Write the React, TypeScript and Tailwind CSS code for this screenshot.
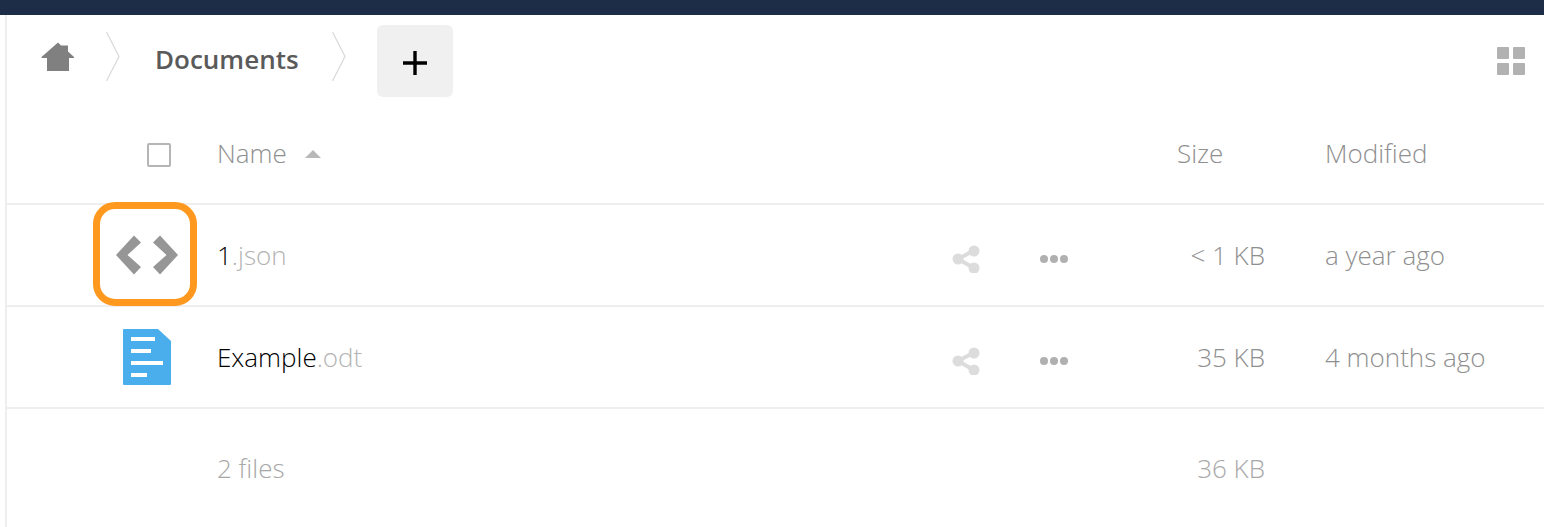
const font = { fontFamily: '"Open Sans", sans-serif' };

function Home() {
  return (
    <svg width="34" height="30" viewBox="0 0 34 30" className="block">
      <path d="M17 0.5 L20 3.5 H27 V9.5 L33 15 V16 H28 V29 H6 V16 H0.5 V15 Z" fill="#808080" />
    </svg>
  );
}

function Crumb() {
  return (
    <svg width="14" height="50" viewBox="0 0 14 50" className="block">
      <path d="M0.5 0 L13 24.5 L0.5 49" fill="none" stroke="#d8d8d8" strokeWidth="1.2" />
    </svg>
  );
}

function Share() {
  return (
    <svg width="28" height="28" viewBox="0 0 28 28" className="block">
      <path d="M6 14 L22 5.5 M6 14 L22 23" stroke="#dcdcdc" strokeWidth="4" fill="none" />
      <circle cx="6" cy="14" r="5.5" fill="#dcdcdc" />
      <circle cx="22" cy="6" r="5.5" fill="#dcdcdc" />
      <circle cx="22" cy="23" r="5.5" fill="#dcdcdc" />
    </svg>
  );
}

function Dots() {
  return (
    <div className="flex gap-[2px]">
      <span className="block h-[8px] w-[8px] rounded-full bg-[#b0b0b0]" />
      <span className="block h-[8px] w-[8px] rounded-full bg-[#b0b0b0]" />
      <span className="block h-[8px] w-[8px] rounded-full bg-[#b0b0b0]" />
    </div>
  );
}

function CodeIcon() {
  return (
    <svg width="62" height="40" viewBox="0 0 62 40" className="block">
      <path d="M0 20 L18 0.5 L25 7.5 L11.5 20 L25 32 L18 39.5 Z M62 20 L44 0.5 L37 7.5 L50.5 20 L37 32 L44 39.5 Z" fill="#969696" />
    </svg>
  );
}

function DocIcon() {
  return (
    <svg width="48" height="56" viewBox="0 0 48 56" className="block">
      <path d="M1 0 H35 L48 12 V55 A1 1 0 0 1 47 56 H1 A1 1 0 0 1 0 55 V1 A1 1 0 0 1 1 0 Z" fill="#4baeec" />
      <path d="M8 8 H32 V12 H8 Z M8 20 H28 V24 H8 Z M8 32 H40 V36 H8 Z M8 44 H24 V48 H8 Z" fill="#fff" />
    </svg>
  );
}

function FileRow({ base, ext, size, modified, icon, highlight }: { base: string; ext: string; size: string; modified: string; icon: React.ReactNode; highlight?: boolean }) {
  return (
    <div className="flex h-[102px] items-center border-t-2 border-[#eeeeee]">
      <div className="relative flex w-[210px] justify-center pl-[70px]">
        {icon}
        {highlight && (
          <div className="absolute left-[86px] top-[-33px] h-[104px] w-[104px] rounded-[22px] border-[7px] border-[#ff981f]" />
        )}
      </div>
      <div className="w-[735px] text-[26px] font-light leading-none text-[#000000]">
        {base}
        <span className="text-[#b4b4b4]">{ext}</span>
      </div>
      <div className="mt-[7px] w-[88px]"><Share /></div>
      <div className="mt-[7px] w-[100px]"><Dots /></div>
      <div className="w-[125px] text-right text-[26px] font-light leading-none text-[#8f8f8f]">{size}</div>
      <div className="pl-[60px] text-[26px] font-light leading-none whitespace-nowrap text-[#8f8f8f]">{modified}</div>
    </div>
  );
}

export default function App() {
  return (
    <div className="h-[527px] w-[1544px] overflow-hidden bg-white" style={font}>
      <div className="h-[15px] bg-[#1d2d48]" />
      <div className="ml-[5px] h-[512px] border-l-2 border-[#eeeeee]">
        <div className="flex h-[92px] items-start pt-[10px]">
          <div className="flex h-[72px] items-center">
            <div className="ml-[34px] mr-[31px] mt-[-8px]"><Home /></div>
            <div className="mt-[-8px]"><Crumb /></div>
            <div className="ml-[35px] mt-[-4px] text-[26px] font-semibold leading-none text-[#5a5a5a]">Documents</div>
            <div className="ml-[33px] mt-[-8px]"><Crumb /></div>
            <div className="ml-[31px] flex h-[72px] w-[76px] items-center justify-center rounded-[6px] bg-[#f0f0f0]">
              <svg width="26" height="26" viewBox="0 0 26 26" className="mt-[4px] block">
                <path d="M13 1 V25 M1 13 H25" stroke="#000" strokeWidth="3.4" />
              </svg>
            </div>
          </div>
          <div className="ml-auto mr-[19px] mt-[22px] grid grid-cols-2 gap-[4px]">
            <span className="block h-[12px] w-[12px] rounded-[1px] bg-[#b2b2b2]" />
            <span className="block h-[12px] w-[12px] rounded-[1px] bg-[#b2b2b2]" />
            <span className="block h-[12px] w-[12px] rounded-[1px] bg-[#b2b2b2]" />
            <span className="block h-[12px] w-[12px] rounded-[1px] bg-[#b2b2b2]" />
          </div>
        </div>
        <div className="flex h-[96px] items-center pb-[1px]">
          <div className="ml-[140px] h-[24px] w-[24px] rounded-[2px] border-2 border-[#b5b5b5]" />
          <div className="mb-[4px] ml-[46px] text-[26px] font-light leading-none text-[#8f8f8f]">Name</div>
          <svg width="16" height="8" viewBox="0 0 16 8" className="mb-[2px] ml-[18px] block">
            <path d="M8 0 L16 8 H0 Z" fill="#b8b8b8" />
          </svg>
          <div className="mb-[4px] ml-auto w-[148px] text-[26px] font-light leading-none text-[#8f8f8f]">Size</div>
          <div className="mb-[4px] w-[219px] text-[26px] font-light leading-none text-[#8f8f8f]">Modified</div>
        </div>
        <FileRow base="1" ext=".json" size="< 1 KB" modified="a year ago" icon={<CodeIcon />} highlight />
        <FileRow base="Example" ext=".odt" size="35 KB" modified="4 months ago" icon={<DocIcon />} />
        <div className="flex h-[120px] items-center border-t-2 border-[#eeeeee]">
          <div className="w-[210px]" />
          <div className="w-[923px] text-[26px] font-light leading-none text-[#a8a8a8]">2 files</div>
          <div className="w-[125px] text-right text-[26px] font-light leading-none text-[#a8a8a8]">36 KB</div>
        </div>
      </div>
    </div>
  );
}
